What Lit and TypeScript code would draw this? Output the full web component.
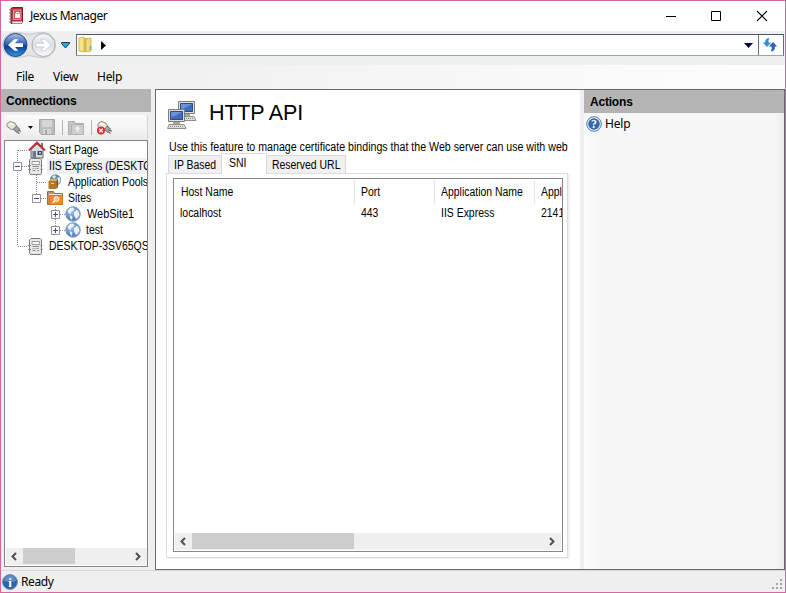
import { LitElement, html, svg, css } from "lit";
import { customElement } from "lit/decorators.js";

const home = html`<svg width="18" height="18" viewBox="0 0 18 18"><path d="M3 8.5V17h12V8.5L9 3z" fill="#d9dde0" stroke="#5d666c"/><path d="M13 2h2v5h-2z" fill="#777"/><path d="M.8 9.3 9 1.5l8.2 7.8" fill="none" stroke="#d0242b" stroke-width="1.800"/><path d="M4.5 10H8v7H4.5z" fill="#707a84"/><path d="M9.5 10H14v4H9.5z" fill="#394c62"/><path d="M11 11h2v2h-2z" fill="#9db4ca"/></svg>`;
const server = html`<svg width="16" height="17" viewBox="0 0 16 17"><path d="M1.500 2 3 .5h9L13.500 2v13L12.500 16.500h-10L1.500 15z" fill="#e9e9e9" stroke="#7c7c7c"/><path d="M4 3.500h7.500v3H4z" fill="#fff" stroke="#999"/><path d="M4.500 8.500h6.500M4.500 10.500h1m1 0h1m1 0h2M4.500 12.500h3m2 0h1.500" stroke="#888"/><path d="M0 7.500h3M0 11.500h3M12.500 7.500h2M12.500 11.500h2" stroke="#808080"/></svg>`;
const globe = html`<svg width="16" height="16" viewBox="0 0 16 16"><defs><radialGradient id="g" cx=".35" cy=".3"><stop offset="0" stop-color="#a9cbe9"/><stop offset="1" stop-color="#5a86ba"/></radialGradient></defs><circle cx="8" cy="8" r="7.300" fill="url(#g)" stroke="#8aa2bd"/><path d="M2.500 5 5 2l3-.5 1.500 1.500L8 5 6 6l-.5 2L4 7.500zM9 6l3-2.500L14 6l.5 3-2 3-1.500 1L9 9.500zM5 9l2.500 1.500L7 14 5 12z" fill="#e9f2fa"/></svg>`;
const pools = html`<svg width="16" height="16" viewBox="0 0 16 16"><circle cx="8.500" cy="6" r="5.700" fill="#658bb5"/><path d="M5 2.500 8 1l1 2-2 2zM10 4l3-1 .5 4-2 3z" fill="#d9e5ef"/><path d="M1.500 7h8v8h-8z" fill="#b07a24"/><path d="M1.500 7 3.500 5H11L9.500 7z" fill="#dcae5a"/><path d="m9.500 7 1.500-2v8l-1.500 2z" fill="#855411"/><path d="M4 9h3v1H4z" fill="#f0d69a"/></svg>`;
const sites = html`<svg width="16" height="16" viewBox="0 0 16 16"><path d="M.5 14.500v-13h6l1 2h8v11z" fill="#ba9464" stroke="#957246"/><path d="M2 4h13v3H2z" fill="#eee6dc"/><path d="M2.500 5.500h13v9h-13z" fill="#f58b2c" stroke="#d87318"/><circle cx="9.500" cy="9" r="2.300" fill="#ffc083" stroke="#fff"/><path d="m7.800 10.700-2 2" stroke="#fff" stroke-width="1.500"/></svg>`;
const plug = svg`<path d="m.7 4.500 3-3 5 1.500 2 3-2 3-3.500.5-4-3z" fill="#e4e4e0" stroke="#84847e"/><path d="m3 4 2-1.500 3 1.500-1.500 1.500z" fill="#fffce1"/><path d="m7.500 9.500 3-3.500 3 3-2.500 3.500z" fill="#a5a5a5" stroke="#6c6c6c"/><path d="m12.800 10 2 1.500M11.500 12l2 1.500" stroke="#666" stroke-width="1.200"/>`;
const chevron = (d: string) => html`<svg width="17" height="17" viewBox="0 0 17 17"><path d=${d} fill="none" stroke="#505050" stroke-width="2"/></svg>`;
const LEFT = "M10 5 6.500 8.500l3.500 3.500";
const RIGHT = "M6 5 9.500 8.500 6 12";

const monitor = (x: number, y: number) => svg`<g transform="translate(${x} ${y})"><path d="M.5.5h16v12H.5z" fill="#dcded9" stroke="#7d7f79"/><path d="M2.500 2.500h12v8h-12z" fill="#416bbd" stroke="#2b4c88"/><path d="M3 3h11L3.500 8.500z" fill="#6f93d6"/><path d="M5 13h7v2H5z" fill="#a2a49e"/><path d="m1 15.500-1.500 4h18.500l-2-4z" fill="#ddd" stroke="#8d8f88"/><path d="M2 17.500h13" stroke="#888" stroke-dasharray="1 1"/></g>`;

@customElement("app-root")
export class AppRoot extends LitElement {
  static styles = css`
    :host { display: block; height: 593px; font: 12px/16px "Liberation Sans", Arial, sans-serif; color: #000; }
    * { box-sizing: border-box; }
    svg { display: block; flex: none; }
    span, h1 { white-space: nowrap; }
    .t { display: inline-block; transform: scaleX(.87); transform-origin: 0 50%; }
    .window { width: 786px; height: 593px; border: 1px solid #d767a2; background: #efefef; display: flex; flex-direction: column; overflow: hidden; }
    .ui { font-family: "Noto Sans", "Open Sans", sans-serif; font-size: 12px; }
    .title { height: 30px; background: #fff; display: flex; align-items: center; padding: 0 17px 0 7px; }
    .title span { margin-left: 5px; flex: 1; letter-spacing: -.46px; }
    .nav { height: 28px; display: flex; align-items: center; }
    .address { margin-left: 5px; width: 708px; height: 22px; display: flex; align-items: center; background: #fff; border: 1px solid #63717b; border-top-color: #4a5860; border-bottom-color: #98a4ad; padding-left: 1px; }
    .address .arrow { margin-left: 8px; }
    .address .drop { margin-left: auto; margin-right: 5px; }
    .refresh { width: 25px; height: 20px; border-left: 1px solid #63717b; padding: 2px 3px; }
    .menu { margin-top: 6px; height: 24px; display: flex; align-items: center; padding-left: 15px; gap: 19px; background: linear-gradient(90deg, #efefef 0, #f1f1f1 180px, #fbfbfb 640px, #fcfcfc); }
    .body { height: 481px; display: flex; }
    .side { width: 150px; }
    .head { height: 23px; background: #b4b4b4; font-weight: bold; line-height: 24px; padding-left: 5px; letter-spacing: -.2px; }
    .tools { height: 25px; margin: 3px 3px 0; display: flex; align-items: center; border-right: 1px solid #d4d4d4; background: linear-gradient(#fafafa, #f3f3f3 60%, #e9e9e9); border-radius: 3px; }
    .tree { position: relative; width: 144px; height: 427px; margin: 0 3px; border: 1px solid #828790; background: #fff; display: flex; flex-direction: column; padding: 1px 0 1px 1px; overflow: hidden; }
    .lines { position: absolute; left: 0; top: 0; }
    .row { position: relative; height: 16px; display: flex; align-items: center; flex: none; }
    .row > span { margin-left: 3px; padding-left: 2px; height: 16px; line-height: 16px; }
    .row .picked { background: #efefef; width: 120px; }
    .row > .near { margin-left: 1px; }
    .lvl0 { padding-left: 22px; } .lvl1 { padding-left: 41px; } .lvl2 { padding-left: 59px; }
    .row .wide { padding-left: 3px; }
    .wide .t { transform: scaleX(.91); }
    .scroll { height: 17px; display: flex; justify-content: space-between; background: #efefef; margin-top: auto; flex: none; }
    .scroll i { background: #cdcdcd; height: 16px; margin-right: auto; }
    .thumb1 { width: 52px; } .thumb2 { width: 162px; }
    .main { margin-left: 4px; width: 630px; border: 1px solid #696969; display: flex; }
    .page { width: 424px; background: #fff; padding: 9px 0 0 10px; }
    .heading { display: flex; height: 34px; padding-left: 1px; }
    h1 { margin: 0 0 0 12px; font: 21.500px/28px "Liberation Sans", Arial, sans-serif; letter-spacing: -.15px; }
    .intro { height: 20px; padding-left: 3px; line-height: 28px; }
    .intro .t { transform: scaleX(.886); }
    .tabs { display: flex; height: 20px; align-items: flex-end; padding: 0 0 0 2px; }
    .tab { border: 1px solid #d9d9d9; background: #f0f0f0; height: 18px; line-height: 19px; padding-left: 5px; border-bottom: 0; }
    .tab.ip { width: 54px; } .tab.reserved { width: 80px; }
    .tab.on { height: 21px; margin: 0 -1px -1px; position: relative; background: #fff; width: 46px; padding-left: 7px; line-height: 18px; }
    .pane { width: 402px; height: 385px; border: 1px solid #dcdcdc; box-shadow: 2px 1px 0 #f0f0f0; padding: 4px 0 0 6px; }
    .list { width: 390px; height: 374px; border: 1px solid #828790; padding: 1px; display: flex; flex-direction: column; overflow: hidden; }
    .cols { display: grid; grid-template-columns: 180px 80px 100px 120px; height: 24px; flex: none; line-height: 24px; }
    .cols > span { padding-left: 6px; border-right: 1px solid #e5e5e5; }
    .cols.data { height: 19px; line-height: 18px; }
    .cols.data > span { border: 0; padding-left: 5px; } .cols.data > span + span { padding-left: 6px; }
    .actions { width: 200px; margin-left: 4px; background: linear-gradient(90deg, #fcfcfc, #f7f7f7 14px, #f7f7f7 190px, #ececec); }
    .actions .head { padding-left: 6px; }
    .help { display: flex; padding: 3px 0 0 2px; gap: 3px; align-items: center; line-height: 16px; letter-spacing: -.2px; }
    .status { border-top: 1px solid #d7d7d7; height: 22px; display: flex; align-items: center; padding: 0 2px 0 1px; }
    .status span { margin-left: 3px; flex: 1; letter-spacing: -.4px; }
    .status .grip { align-self: flex-end; }
    .menu span { letter-spacing: -.3px; }
  `;

  private label(text: string) {
    return html`<span class="t">${text}</span>`;
  }

  render() {
    const l = this.label;
    return html`<div class="window">
      <header class="title ui">
        <svg width="17" height="18" viewBox="0 0 17 18"><path d="M3 1.500 4.500.5H14.500v14l-1 2H3z" fill="#bd2633" stroke="#741b23"/><path d="M4 14.500h9l1-1v2l-1 1H4z" fill="#eee"/><path d="M5.500 3H13v9.500H5.500z" fill="#d94b56" stroke="#ef9299"/><path d="M7 7h5v4H7z" fill="#fff"/><path d="M8 7V5.500h3V7" fill="none" stroke="#fff"/><path d="M1 3h4M1 6h4M1 9h4M1 12h4M1 15h4" stroke="#777"/></svg>
        <span>Jexus Manager</span>
        <svg width="102" height="12" viewBox="0 0 102 12"><path d="M0 6.500h10M45.500 1.500h9v9h-9z" fill="none" stroke="#000"/><path d="m91 1 10 10m0-10L91 11" stroke="#000" stroke-width="1.100"/></svg>
      </header>
      <div class="nav">
        <svg width="70" height="28" viewBox="0 0 70 28"><defs><linearGradient id="b" x2="0" y2="1"><stop stop-color="#a9c2e6"/><stop offset=".45" stop-color="#3465b4"/><stop offset=".55" stop-color="#0b3c94"/><stop offset="1" stop-color="#2c9be8"/></linearGradient><linearGradient id="w" x2="0" y2="1"><stop stop-color="#f5f7f9"/><stop offset=".5" stop-color="#d9dfe5"/><stop offset="1" stop-color="#f7fafc"/></linearGradient></defs>
          <path d="M14 1.500q7 0 14 2 7-2 14-2a12.500 12.500 0 0 1 0 25q-7 0-14-2-7 2-14 2a12.500 12.500 0 0 1 0-25" fill="#e3e4e6" stroke="#c6c8ca"/>
          <circle cx="14.500" cy="14" r="11.500" fill="url(#b)" stroke="#24477f"/><circle cx="42.500" cy="14" r="11.500" fill="url(#w)" stroke="#aab0b6"/>
          <path d="M22 12.300h-8l3.300-4h-4L7 14l6.300 5.700h4L14 15.900h8z" fill="#fff"/><path d="M35 12.300h8l-3.300-4h4L50 14l-6.300 5.700h-4l3.300-3.800h-8z" fill="#fff" stroke="#c3c9cf" stroke-width=".7"/>
          <path d="M60.500 11.500h8v1L64.500 17l-4-4.500z" fill="#28a7d8" stroke="#163a61"/></svg>
        <div class="address">
          <svg width="15" height="18" viewBox="0 0 15 18"><path d="m1 2 5-1v15l-5-1z" fill="#f7e28d" stroke="#d5b953"/><path d="M6 2h4v14H6z" fill="#d7b650"/><path d="m8 3 5-1v13l-5 1z" fill="#f3da80" stroke="#d5b953"/><path d="M12.500 10v4" stroke="#4caee8" stroke-width="1.500"/></svg>
          <svg class="arrow" width="5" height="9" viewBox="0 0 5 9"><path d="M0 0v9l5-4.500z"/></svg>
          <svg class="drop" width="9" height="5" viewBox="0 0 9 5"><path d="M0 0h9L4.500 5z" fill="#000050"/></svg>
          <div class="refresh"><svg width="17" height="16" viewBox="0 0 17 16"><path d="M7.500 1Q3 1 3 5.500H.800l4.200 4.500 4.200-4.500H6.500Q6 3 7.500 1" fill="#3592d8"/><path d="M8.800 14.500q4.200 0 4.200-5h2.200L11 5 6.800 9.500h2.700q.8 3-.7 5" fill="#2b66b2"/></svg></div>
        </div>
      </div>
      <nav class="menu ui"><span>File</span><span>View</span><span>Help</span></nav>
      <div class="body">
        <aside class="side">
          <div class="head">Connections</div>
          <div class="tools">
            <svg width="143" height="25" viewBox="0 0 143 25"><g transform="translate(2 5)">${plug}</g><path d="M24 11h5l-2.500 3z"/>
              <path d="M35.500 4.500h15v15h-13l-2-2z" fill="#bdbdbd" stroke="#a5a5a5"/><path d="M38 5h10v7H38zM39 14h8v5h-8z" fill="#d5d5d5"/><path d="M41 15h2v4h-2z" fill="#a6a6a6"/>
              <path d="M58.500 5v15M87.500 5v15" stroke="#b5b5b5"/>
              <path d="M64.500 19.500v-13h6l1 2h8v11z" fill="#c6c6c6" stroke="#acacac"/><path d="M67.500 9.500h12v10h-12z" fill="#cecece" stroke="#b2b2b2"/><path d="m73.500 11 3 3h-2v3h-2v-3h-2z" fill="#eee"/>
              <g transform="translate(93 5)">${plug}<circle cx="4" cy="10.500" r="4" fill="#e32b31"/><path d="m2.300 8.800 3.400 3.400m0-3.400-3.400 3.400" stroke="#fff" stroke-width="1.300"/></g></svg>
          </div>
          <div class="tree">
            <svg class="lines" width="80" height="120" viewBox="0 0 80 120"><path d="M12.500 9v96M13 9.500h10M17 25.500h7M13 105.500h10M31.500 34v23M32 41.500h10M36 57.500h6M50.500 66v23M55 73.500h6M55 89.500h6" fill="none" stroke="#888" stroke-dasharray="1 1"/>
              ${[[8, 21], [27, 53], [46, 69], [46, 85]].map(([x, y], i) => svg`<path d="M${x + .5} ${y + .5}h8v8h-8z" fill="#fff" stroke="#919191"/><path d=${`M${x + 2} ${y + 4.5}h5` + (i > 1 ? `M${x + 4.5} ${y + 2}v5` : "")} stroke="#3653a1"/>`)}</svg>
            <div class="row lvl0">${home}<span class="near">${l("Start Page")}</span></div>
            <div class="row lvl0">${server}<span class="picked">${l("IIS Express (DESKTOP-3SV65QS)")}</span></div>
            <div class="row lvl1">${pools}<span>${l("Application Pools")}</span></div>
            <div class="row lvl1">${sites}<span>${l("Sites")}</span></div>
            <div class="row lvl2">${globe}<span class="wide">${l("WebSite1")}</span></div>
            <div class="row lvl2">${globe}<span>${l("test")}</span></div>
            <div class="row lvl0">${server}<span>${l("DESKTOP-3SV65QS")}</span></div>
            <div class="scroll">${chevron(LEFT)}<i class="thumb1"></i>${chevron(RIGHT)}</div>
          </div>
        </aside>
        <main class="main">
          <section class="page">
            <div class="heading">
              <svg width="30" height="32" viewBox="0 0 30 32">${monitor(11, 2)}${monitor(1, 10)}</svg>
              <h1>HTTP API</h1>
            </div>
            <div class="intro">${l("Use this feature to manage certificate bindings that the Web server can use with web")}</div>
            <div class="tabs"><div class="tab ip">${l("IP Based")}</div><div class="tab on">${l("SNI")}</div><div class="tab reserved">${l("Reserved URL")}</div></div>
            <div class="pane"><div class="list">
              <div class="cols"><span>${l("Host Name")}</span><span>${l("Port")}</span><span>${l("Application Name")}</span><span>${l("Application Id")}</span></div>
              <div class="cols data"><span>${l("localhost")}</span><span>${l("443")}</span><span>${l("IIS Express")}</span><span>${l("214124cd")}</span></div>
              <div class="scroll">${chevron(LEFT)}<i class="thumb2"></i>${chevron(RIGHT)}</div>
            </div></div>
          </section>
          <section class="actions">
            <div class="head">Actions</div>
            <div class="help ui"><svg width="16" height="16" viewBox="0 0 16 16"><circle cx="8" cy="8" r="7.300" fill="#f1f5fa" stroke="#4d79ad"/><circle cx="8" cy="8" r="5.800" fill="#3669a8"/><text x="8" y="12" text-anchor="middle" font-family="Liberation Serif" font-size="12" font-weight="bold" fill="#fff">?</text></svg><span>Help</span></div>
          </section>
        </main>
      </div>
      <footer class="status ui">
        <svg width="16" height="16" viewBox="0 0 16 16"><circle cx="8" cy="8" r="7.500" fill="#2d64a8" stroke="#8197b2"/><path d="M2 7a6 6 0 0 1 12 0Q8 9 2 7" fill="#5f8dc4"/><text x="8" y="12.500" text-anchor="middle" font-family="Liberation Serif" font-size="13" font-weight="bold" fill="#fff">i</text></svg>
        <span>Ready</span>
        <svg class="grip" width="11" height="13" viewBox="0 0 11 13"><path d="M8 0h2v2H8zM4 4h2v2H4zM8 4h2v2H8zM0 8h2v2H0zM4 8h2v2H4zM8 8h2v2H8z" fill="#a5a5a5"/></svg>
      </footer>
    </div>`;
  }
}
